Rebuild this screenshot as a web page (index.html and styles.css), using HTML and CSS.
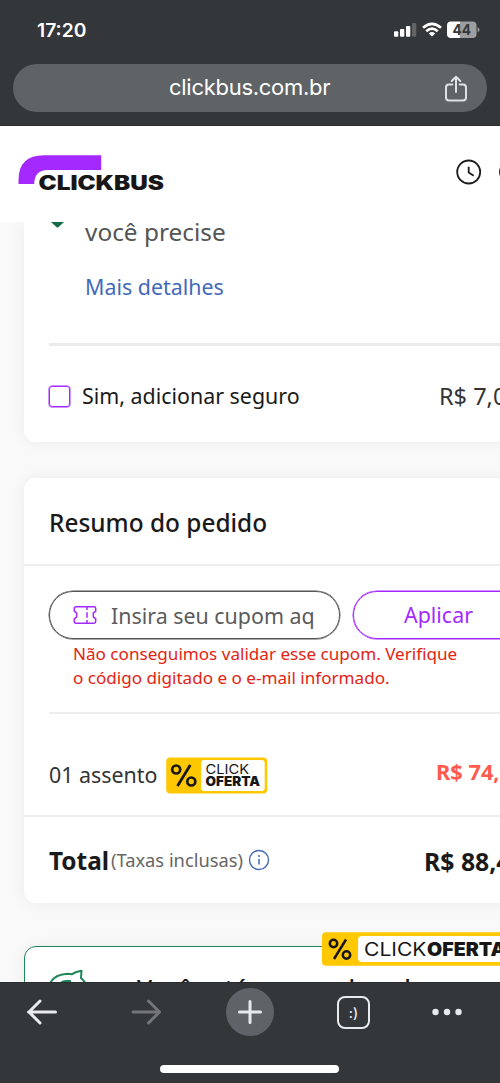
FILE: index.html
```html
<!DOCTYPE html>
<html lang="pt-BR">
<head>
<meta charset="utf-8">
<title>ClickBus</title>
<link rel="stylesheet" href="styles.css">
</head>
<body>
<div class="phone">
  <div class="chrome-top">
    <div class="status">
      <span class="time">17:20</span>
      <svg class="status-icons" width="88" height="20" viewBox="0 0 88 20">
        <g fill="#fff">
          <rect x="1" y="11.3" width="4.3" height="5.5" rx="1"/>
          <rect x="7" y="9" width="4.3" height="7.8" rx="1"/>
          <rect x="13" y="6" width="4.3" height="10.8" rx="1"/>
          <rect x="19" y="3" width="4.3" height="13.8" rx="1" fill="#616465"/>
        </g>
        <g fill="none" stroke="#fff" stroke-width="2.7">
          <path d="M30 7.7 Q39 -0.1 48 7.7"/>
          <path d="M33.3 11.2 Q39 6.2 44.7 11.2"/>
        </g>
        <path d="M35.8 13.4 Q39 10.8 42.2 13.4 L39 16.6 Z" fill="#fff"/>
        <path d="M58 1.5 H67 V18 H58 Q54 18 54 14 V5.5 Q54 1.5 58 1.5Z" fill="#fff"/>
        <path d="M67 1.5 H79.5 Q83.5 1.5 83.5 5.5 V14 Q83.5 18 79.5 18 H67Z" fill="#9c9e9f"/>
        <path d="M84.6 7.3 Q86.5 8 86.5 9.8 Q86.5 11.5 84.6 12.3Z" fill="#9c9e9f"/>
        <text class="battery" x="59.5" y="15" textLength="18.5" lengthAdjust="spacingAndGlyphs">44</text>
      </svg>
    </div>
    <div class="address">
      <span class="url">clickbus.com.br</span>
      <svg class="share" width="24" height="28" viewBox="0 0 24 28" fill="none" stroke="#dfe1e3" stroke-width="2" stroke-linecap="round" stroke-linejoin="round">
        <path d="M8.3 9.5 H5 Q2 9.5 2 12.5 V22.5 Q2 25.5 5 25.5 H19 Q22 25.5 22 22.5 V12.5 Q22 9.5 19 9.5 H15.7"/>
        <path d="M12 17 V2.5 M7.7 6 L12 1.7 L16.3 6"/>
      </svg>
    </div>
  </div>

  <header class="site-header">
    <svg class="logo" width="148" height="38" viewBox="0 0 148 38">
      <path d="M0.5 30 V26 Q0.5 1.3 26 1.3 H83.2 V16 H29.5 Q16.5 16 16.2 30 Z" fill="#a429ff"/>
      <text class="logo-text" x="20.5" y="35.6" textLength="125.5" lengthAdjust="spacingAndGlyphs">CLICKBUS</text>
    </svg>
    <div class="header-icons">
      <svg width="26" height="26" viewBox="0 0 26 26" fill="none" stroke="#1c1c1c" stroke-width="1.8">
        <circle cx="12.7" cy="13" r="11.5"/><path d="M12.7 7.7 V13.5 L17.7 16.7"/>
      </svg>
      <svg width="26" height="26" viewBox="0 0 26 26" fill="none" stroke="#1c1c1c" stroke-width="1.8"><circle cx="12.5" cy="13" r="11.5"/></svg>
    </div>
  </header>

  <main class="content">
    <section class="card insurance">
      <div class="insurance-info">
        <svg class="shield" width="14" height="7" viewBox="0 0 14 7"><path d="M0 0 H13 L7.3 5.3 Q6.5 5.9 5.7 5.3Z" fill="#156b46"/></svg>
        <div class="insurance-copy">
          <p class="need">você precise</p>
          <a class="details">Mais detalhes</a>
        </div>
      </div>
      <div class="rule"></div>
      <div class="row option">
        <span class="checkbox"></span>
        <span class="option-label">Sim, adicionar seguro</span>
        <span class="option-price">R$ 7,00</span>
      </div>
    </section>

    <section class="card summary">
      <h2 class="title">Resumo do pedido</h2>
      <div class="coupon">
        <div class="coupon-form">
          <div class="coupon-input">
            <svg width="24" height="20" viewBox="0 0 24 20" fill="none" stroke="#a429ff" stroke-width="1.5" stroke-linejoin="round">
              <path d="M3 1.8 H21 Q22.7 1.8 22.7 3.5 V6.2 L20.3 8.2 V11.8 L22.7 13.8 V16.5 Q22.7 18.2 21 18.2 H3 Q1.3 18.2 1.3 16.5 V13.8 L3.7 11.8 V8.2 L1.3 6.2 V3.5 Q1.3 1.8 3 1.8Z"/>
              <path d="M14 2 V5 M14 7.3 V12.7 M14 15 V18"/>
            </svg>
            <span class="placeholder">Insira seu cupom aq</span>
          </div>
          <div class="apply">Aplicar</div>
        </div>
        <p class="error">Não conseguimos validar esse cupom. Verifique<br>o código digitado e o e-mail informado.</p>
      </div>
      <div class="row seat">
        <span class="seat-label">01 assento</span>
        <svg class="offer" width="102" height="37" viewBox="0 0 102 37">
          <rect x="0.2" y="0.5" width="101" height="36" rx="4" fill="#ffc800"/>
          <rect x="35.2" y="3" width="63.5" height="31" rx="3" fill="#fff"/>
          <g fill="none" stroke="#171717" stroke-width="2.7"><circle cx="10.2" cy="12.5" r="4"/><circle cx="25.3" cy="24.5" r="4"/><path d="M24.3 8 L11.5 29"/></g>
          <text class="offer-light" x="39.5" y="17" textLength="43.5" lengthAdjust="spacingAndGlyphs">CLICK</text>
          <text class="offer-bold" x="39.5" y="29.3" textLength="54.5" lengthAdjust="spacingAndGlyphs">OFERTA</text>
        </svg>
        <span class="seat-price">R$ 74,90</span>
      </div>
      <div class="row total">
        <span class="total-label">Total</span>
        <span class="taxes">(Taxas inclusas)</span>
        <svg class="info" width="22" height="22" viewBox="0 0 22 22"><circle cx="11" cy="11" r="9.5" fill="none" stroke="#4469b8" stroke-width="1.4"/><path d="M11 9.7 V15.5" stroke="#4469b8" stroke-width="1.5"/><circle cx="11" cy="7" r="1" fill="#4469b8"/></svg>
        <span class="total-price">R$ 88,40</span>
      </div>
    </section>

    <section class="card savings">
      <svg class="piggy" width="42" height="40" viewBox="0 0 42 40" fill="none" stroke="#1f855b" stroke-width="2" stroke-linejoin="round">
        <path d="M1 18 Q3 6 19.5 4.7 L24 5.2 Q28 2.5 33.5 1.8 L33 9 L38 14.5"/>
        <path d="M12 15 Q14 12 18 12 H23"/>
      </svg>
      <span class="saving-text">Você está economizando</span>
      <svg class="ribbon" width="210" height="35" viewBox="0 0 210 35">
        <rect x="0" y="0.3" width="208" height="33.5" rx="4" fill="#ffc800"/>
        <rect x="36" y="4" width="168" height="26" rx="4" fill="#fff"/>
        <g fill="none" stroke="#171717" stroke-width="2.5"><circle cx="11.5" cy="11.5" r="3.7"/><circle cx="24.5" cy="23" r="3.7"/><path d="M24 7.5 L12 27"/></g>
        <text class="ribbon-light" x="42" y="24" textLength="62.5" lengthAdjust="spacingAndGlyphs">CLICK</text>
        <text class="ribbon-bold" x="105" y="24" textLength="79" lengthAdjust="spacingAndGlyphs">OFERTA</text>
      </svg>
    </section>
  </main>

  <footer class="chrome-bottom">
    <nav class="nav">
      <svg width="32" height="48" viewBox="0 0 32 48" fill="none" stroke="#e8eaed" stroke-width="3" stroke-linecap="round" stroke-linejoin="round"><path d="M29.5 24 H2.5 M14 13 L3 24 L14 35"/></svg>
      <svg width="32" height="48" viewBox="0 0 32 48" fill="none" stroke="#737577" stroke-width="3" stroke-linecap="round" stroke-linejoin="round"><path d="M3 24 H29.5 M18.500 13 L29.5 24 L18.500 35"/></svg>
      <svg width="48" height="48" viewBox="0 0 48 48"><circle cx="24" cy="24" r="24" fill="#5f6368"/><path d="M13.5 24 H34.5 M24 13.5 V34.5" stroke="#e8eaed" stroke-width="3" stroke-linecap="round"/></svg>
      <span class="tabs">:)</span>
      <svg width="32" height="48" viewBox="0 0 32 48" fill="#e8eaed"><circle cx="4.5" cy="24" r="3.2"/><circle cx="16" cy="24" r="3.2"/><circle cx="27.5" cy="24" r="3.2"/></svg>
    </nav>
    <div class="home"></div>
  </footer>
</div>
</body>
</html>
```
FILE: styles.css
```css
* { box-sizing: border-box; }
body { margin: 0; font-family: "Noto Sans", sans-serif; color: #1a1a1a; }
p, h2 { margin: 0; }
svg { display: block; flex: none; }
span, a { white-space: nowrap; flex: none; }

.phone { width: 500px; height: 1083px; display: flex; flex-direction: column; overflow: hidden; background: #f9f9f9; }

.chrome-top { flex: none; height: 126px; background: #34373a; border-bottom: 1px solid #292b2d; }
.status { height: 64px; padding: 20px 19px 0 37px; display: flex; justify-content: space-between; }
.time { font: 600 19.3px/21px Inter, sans-serif; color: #fff; }
.battery { font: 700 15px Inter, sans-serif; fill: #34373a; }
.address { height: 48px; margin: 0 13px; padding: 0 19px 0 156px; border-radius: 24px; background: #5f6366; display: flex; align-items: center; justify-content: space-between; }
.url { font: 400 22px/46px Inter, sans-serif; letter-spacing: -0.28px; color: #fff; padding-bottom: 2px; }
.share { margin-top: 1px; }

.site-header { flex: none; height: 96px; padding: 28px 0 0 18px; background: #fff; display: flex; align-items: flex-start; }
.logo-text { font-size: 19.5px; font-weight: 900; fill: #171717; }
.header-icons { display: flex; gap: 17px; margin-left: 290px; padding-top: 5px; }

.content { flex: 1; min-height: 0; overflow: hidden; padding-left: 24px; display: flex; flex-direction: column; }
.card { flex: none; width: 560px; background: #fff; border-radius: 12px; box-shadow: 0 0 16px rgba(0, 0, 0, .06); }
.row { display: flex; align-items: center; }

.insurance { height: 220px; border-radius: 0 0 12px 12px; padding-left: 25px; }
.insurance-info { height: 121px; display: flex; gap: 20px; padding-left: 2px; }
.insurance-copy { display: flex; flex-direction: column; }
.need { font-size: 24.4px; line-height: 20px; color: #555; }
.details { font-size: 21.4px; line-height: 30px; margin-top: 30px; color: #4469b8; }
.rule { height: 3px; background: #ebebeb; }
.option { height: 100px; }
.checkbox { width: 21px; height: 21px; border: 1px solid #a429ff; box-shadow: 0 0 0 .5px #a429ff; border-radius: 3px; }
.option-label { margin-left: 12px; width: 357px; padding-bottom: 2px; font-size: 21.4px; }
.option-price { font-size: 23.5px; color: #333; }

.summary { height: 425px; margin-top: 36px; }
.title { height: 88px; padding-left: 25px; font-size: 24.4px; font-weight: 500; line-height: 90px; border-bottom: 2px solid #eee; }
.coupon { height: 148px; margin: 0 25px; padding-top: 25px; border-bottom: 2px solid #eee; }
.coupon-form { display: flex; gap: 13px; }
.coupon-input { width: 291px; height: 48px; border: 1px solid #555; box-shadow: 0 0 0 .5px #555; border-radius: 24px; padding-left: 23px; display: flex; align-items: center; gap: 14px; }
.placeholder { font-size: 21.4px; color: #5b5b5b; }
.apply { width: 194px; height: 48px; border: 1px solid #a429ff; box-shadow: 0 0 0 .5px #a429ff; border-radius: 24px; padding-left: 50px; font-size: 21.4px; line-height: 45px; color: #a429ff; }
.error { padding: 3px 0 0 24px; font-size: 17.1px; line-height: 24.4px; color: #e42313; }
.seat { height: 103px; padding: 20px 0 0 25px; border-bottom: 2px solid #eee; }
.seat-label { width: 117px; font-size: 21.4px; color: #333; }
.offer { margin-top: 1px; }
.seat-price { margin-left: 168px; padding-bottom: 6px; font-size: 21.8px; font-weight: 700; color: #ff5a4d; }
.total { height: 86px; padding-left: 25px; }
.total-label { width: 62px; padding-top: 1px; font-size: 24.4px; font-weight: 700; }
.taxes { width: 137px; padding-bottom: 1px; font-size: 18.3px; color: #666; }
.total-price { margin-left: 154px; padding-top: 1px; font-size: 24.8px; font-weight: 700; }

.savings { position: relative; height: 120px; margin-top: 43px; border: 1px solid #1f855b; padding: 22px 0 0 23px; display: flex; align-items: flex-start; }
.saving-text { margin-left: 47px; margin-top: 3px; font-size: 24.4px; line-height: 33px; font-weight: 500; }
.ribbon { position: absolute; left: 297px; top: -15px; }

.logo-text, .offer-bold, .ribbon-bold, .offer-light, .ribbon-light { font-family: Inter, sans-serif; }
.offer-light { font-size: 13px; font-weight: 400; fill: #171717; }
.offer-bold { font-size: 13px; font-weight: 900; fill: #171717; }
.ribbon-light { font-size: 18.5px; font-weight: 400; fill: #171717; }
.ribbon-bold { font-size: 18.5px; font-weight: 900; fill: #171717; }

.chrome-bottom { flex: none; height: 101px; background: #34373a; border-top: 1px solid #292b2d; }
.nav { height: 58px; padding: 5px 0 5px 26px; display: flex; align-items: center; }
.nav > :nth-child(2) { margin-left: 72px; }
.nav > :nth-child(3) { margin-left: 64px; }
.nav > :nth-child(4) { margin-left: 63px; }
.nav > :nth-child(5) { margin-left: 61px; }
.tabs { width: 33px; height: 33px; border: 2px solid #e8eaed; border-radius: 8px; font: 500 14px/29px Inter, sans-serif; text-align: center; color: #e8eaed; }
.home { width: 179px; height: 8px; margin: 24px auto 0 160px; border-radius: 4px; background: #fff; }
```
